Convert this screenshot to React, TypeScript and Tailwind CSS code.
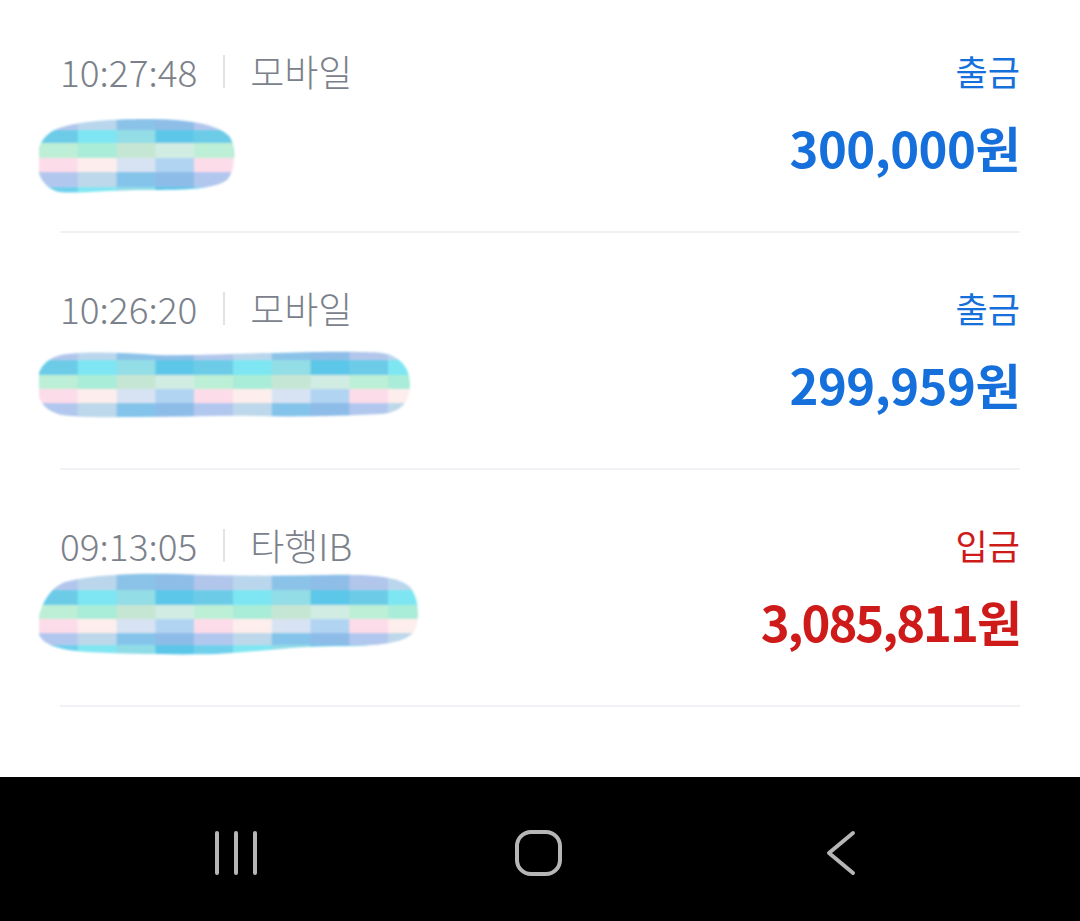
import React, { useId } from "react";

const COLS: string[][] = [
  // top, cyan, green, pink, blue, bottom cyan
  ["#b2c6ec", "#6ccce8", "#bcefd6", "#fddce9", "#b2c7ee", "#70d0ec"],
  ["#bad6ec", "#7de6f2", "#a9ecd8", "#fdeeed", "#bdd8ea", "#80e6f2"],
  ["#8ac2e8", "#93dde6", "#c6e6d4", "#d7e3f3", "#84c4ea", "#90dce6"],
  ["#8ebee8", "#5bc7e8", "#d1ece3", "#b1d4f2", "#8ebce8", "#5cc6e8"],
];

type MosaicProps = {
  width: number;
  height: number;
  bands: [number, number][];
  path: string;
};

function Mosaic({ width, height, bands, path }: MosaicProps) {
  const id = useId().replace(/:/g, "");
  const colW = 38.8;
  const n = Math.ceil(width / colW) + 1;
  const rects: React.ReactNode[] = [];
  for (let c = 0; c < n; c++) {
    bands.forEach(([y0, y1], b) => {
      rects.push(
        <rect
          key={`${c}-${b}`}
          x={2 + c * colW}
          y={y0}
          width={colW + 0.6}
          height={y1 - y0 + 0.6}
          fill={COLS[c % 4][b % 6]}
        />
      );
    });
  }
  return (
    <svg width={width} height={height} viewBox={`0 0 ${width} ${height}`} className="block">
      <defs>
        <clipPath id={`c${id}`}>
          <path d={path} />
        </clipPath>
        <filter id={`f${id}`} x="-5%" y="-10%" width="110%" height="120%">
          <feGaussianBlur stdDeviation="0.9" />
        </filter>
      </defs>
      <g filter={`url(#f${id})`}>
        <g clipPath={`url(#c${id})`}>{rects}</g>
      </g>
    </svg>
  );
}

type Row = {
  time: string;
  via: string;
  kind: string;
  amount: string;
  color: string;
  tracking: string;
  first?: boolean;
  mosaic: MosaicProps;
  mosaicTop: string;
};

const rows: Row[] = [
  {
    time: "10:27:48",
    via: "모바일",
    kind: "출금",
    amount: "300,000원",
    color: "text-[#1670dc]",
    tracking: "tracking-[-0.5px]",
    first: true,
    mosaicTop: "mt-[25px]",
    mosaic: {
      width: 199,
      height: 77,
      bands: [
        [0, 12],
        [12, 25],
        [25, 40],
        [40, 54],
        [54, 69],
        [69, 77],
      ],
      path:
        "M14 14 C30 4 70 1 110 1 C150 1 180 6 192 18 C200 28 199 52 190 62 C178 71 150 72 110 72 C70 72 40 76 22 74 C6 70 0 56 0 42 C0 30 5 20 14 14 Z",
    },
  },
  {
    time: "10:26:20",
    via: "모바일",
    kind: "출금",
    amount: "299,959원",
    color: "text-[#1670dc]",
    tracking: "tracking-[-0.5px]",
    mosaicTop: "mt-[20px]",
    mosaic: {
      width: 374,
      height: 70,
      bands: [
        [-10, 10],
        [10, 25],
        [25, 39],
        [39, 53],
        [53, 70],
      ],
      path:
        "M30 4 C60 1 90 3 120 5 C160 6 200 3 240 3 C280 2 320 1 345 3 C365 6 373 20 373 34 C373 50 366 62 345 64 C300 66 260 67 220 66 C180 65 140 67 100 67 C70 67 45 68 25 65 C6 61 0 48 0 35 C0 18 10 6 30 4 Z",
    },
  },
  {
    time: "09:13:05",
    via: "타행IB",
    kind: "입금",
    amount: "3,085,811원",
    color: "text-[#cf1a1a]",
    tracking: "tracking-[-2px]",
    mosaicTop: "mt-[3px]",
    mosaic: {
      width: 384,
      height: 87,
      bands: [
        [0, 20],
        [20, 35],
        [35, 49],
        [49, 63],
        [63, 75],
        [75, 87],
      ],
      path:
        "M28 12 C60 4 100 3 140 4 C190 6 240 6 290 5 C330 4 360 6 372 16 C382 26 383 48 378 60 C370 74 340 76 300 76 C260 76 220 82 180 84 C140 85 90 84 50 82 C20 80 2 74 1 60 C0 44 8 20 28 12 Z",
    },
  },
];

function RecentsIcon() {
  return (
    <svg width="60" height="46" viewBox="0 0 60 46" fill="none">
      <g stroke="#b6b6b6" strokeWidth="4" strokeLinecap="round">
        <line x1="9" y1="3" x2="9" y2="43" />
        <line x1="28" y1="3" x2="28" y2="43" />
        <line x1="47" y1="3" x2="47" y2="43" />
      </g>
    </svg>
  );
}

function HomeIcon() {
  return (
    <svg width="60" height="46" viewBox="0 0 60 46" fill="none">
      <rect x="7" y="2" width="43" height="42" rx="14" stroke="#b6b6b6" strokeWidth="4" />
    </svg>
  );
}

function BackIcon() {
  return (
    <svg width="60" height="46" viewBox="0 0 60 46" fill="none">
      <polyline
        points="41,3 17,23 41,43"
        stroke="#b6b6b6"
        strokeWidth="4"
        strokeLinecap="round"
        strokeLinejoin="round"
      />
    </svg>
  );
}

export default function App() {
  return (
    <div
      className="w-[1080px] h-[921px] flex flex-col bg-white overflow-hidden"
      style={{ fontFamily: '"Noto Sans CJK KR", "Noto Sans", sans-serif' }}
    >
      <div className="flex-1 px-[60px]">
        {rows.map((r) => (
          <div key={r.time} className={`flex flex-col ${r.first ? "h-[233px]" : "h-[237px]"}`}>
            <div className={`flex-1 flex justify-between ${r.first ? "pt-[49px]" : "pt-[53px]"}`}>
              <div className="flex flex-col">
                <div className="flex items-center h-[44px] text-[#7b818a] font-light">
                  <span className="text-[37px] leading-[44px]">{r.time}</span>
                  <span className="w-[2px] h-[33px] bg-[#e0e4e9] ml-[26px] mr-[25px]" />
                  <span className="text-[37px] leading-[44px]">{r.via}</span>
                </div>
                <div className={`${r.mosaicTop} ml-[-23px]`}>
                  <Mosaic {...r.mosaic} />
                </div>
              </div>
              <div className={`flex flex-col items-end ${r.color}`}>
                <span className="text-[35px] leading-[44px]">{r.kind}</span>
                <span className={`mt-[24px] text-[49px] leading-[60px] font-bold ${r.tracking}`}>
                  {r.amount}
                </span>
              </div>
            </div>
            <div className="h-[2px] bg-[#f0f2f5]" />
          </div>
        ))}
      </div>
      <div className="h-[144px] bg-black flex justify-center items-start pt-[53px] gap-[242px]">
        <RecentsIcon />
        <HomeIcon />
        <BackIcon />
      </div>
    </div>
  );
}
